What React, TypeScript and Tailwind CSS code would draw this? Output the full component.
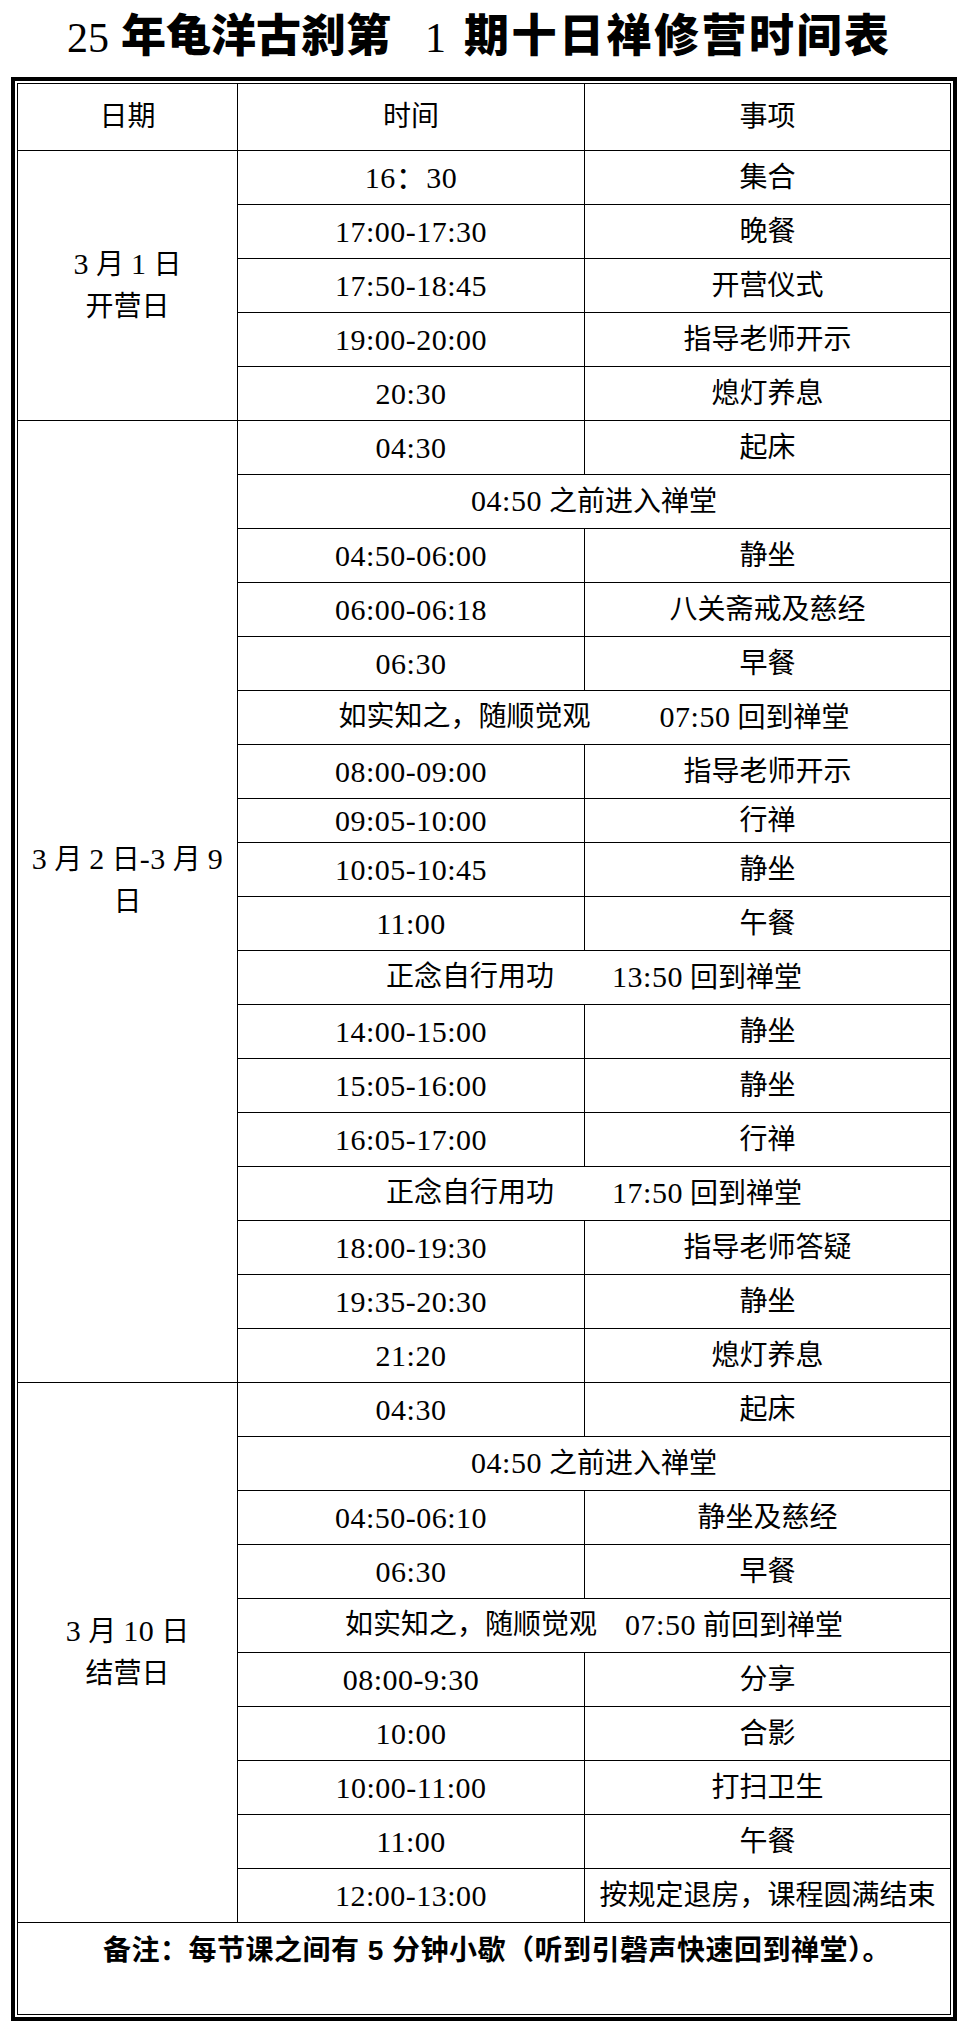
import type { ReactNode } from "react";

type Item =
  | { time: string; event: string; short?: boolean }
  | { span: ReactNode };

type Day = {
  label: ReactNode;
  spanClass: string;
  labelClass?: string;
  items: Item[];
};

const Num = ({ children }: { children: ReactNode }) => (
  <span className="text-[30px] tracking-[0.5px]">{children}</span>
);

const days: Day[] = [
  {
    label: (
      <>
        <div>
          <Num>3</Num> 月 <Num>1</Num> 日
        </div>
        <div>开营日</div>
      </>
    ),
    spanClass: "row-span-5",
    items: [
      { time: "16：30", event: "集合" },
      { time: "17:00-17:30", event: "晚餐" },
      { time: "17:50-18:45", event: "开营仪式" },
      { time: "19:00-20:00", event: "指导老师开示" },
      { time: "20:30", event: "熄灯养息" },
    ],
  },
  {
    label: (
      <>
        <div>
          <Num>3</Num> 月 <Num>2</Num> 日<Num>-3</Num> 月 <Num>9</Num>
        </div>
        <div>日</div>
      </>
    ),
    spanClass: "row-span-18",
    labelClass: "pb-[42px]",
    items: [
      { time: "04:30", event: "起床" },
      {
        span: (
          <span>
            <Num>04:50</Num> 之前进入禅堂
          </span>
        ),
      },
      { time: "04:50-06:00", event: "静坐" },
      { time: "06:00-06:18", event: "八关斋戒及慈经" },
      { time: "06:30", event: "早餐" },
      {
        span: (
          <div className="flex gap-[69px]">
            <span>如实知之，随顺觉观</span>
            <span>
              <Num>07:50</Num> 回到禅堂
            </span>
          </div>
        ),
      },
      { time: "08:00-09:00", event: "指导老师开示" },
      { time: "09:05-10:00", event: "行禅", short: true },
      { time: "10:05-10:45", event: "静坐" },
      { time: "11:00", event: "午餐" },
      {
        span: (
          <div className="flex gap-[58px]">
            <span>正念自行用功</span>
            <span>
              <Num>13:50</Num> 回到禅堂
            </span>
          </div>
        ),
      },
      { time: "14:00-15:00", event: "静坐" },
      { time: "15:05-16:00", event: "静坐" },
      { time: "16:05-17:00", event: "行禅" },
      {
        span: (
          <div className="flex gap-[58px]">
            <span>正念自行用功</span>
            <span>
              <Num>17:50</Num> 回到禅堂
            </span>
          </div>
        ),
      },
      { time: "18:00-19:30", event: "指导老师答疑" },
      { time: "19:35-20:30", event: "静坐" },
      { time: "21:20", event: "熄灯养息" },
    ],
  },
  {
    label: (
      <>
        <div>
          <Num>3</Num> 月 <Num>10</Num> 日
        </div>
        <div>结营日</div>
      </>
    ),
    spanClass: "row-span-10",
    items: [
      { time: "04:30", event: "起床" },
      {
        span: (
          <span>
            <Num>04:50</Num> 之前进入禅堂
          </span>
        ),
      },
      { time: "04:50-06:10", event: "静坐及慈经" },
      { time: "06:30", event: "早餐" },
      {
        span: (
          <div className="flex gap-[28px]">
            <span>如实知之，随顺觉观</span>
            <span>
              <Num>07:50</Num> 前回到禅堂
            </span>
          </div>
        ),
      },
      { time: "08:00-9:30", event: "分享" },
      { time: "10:00", event: "合影" },
      { time: "10:00-11:00", event: "打扫卫生" },
      { time: "11:00", event: "午餐" },
      { time: "12:00-13:00", event: "按规定退房，课程圆满结束" },
    ],
  },
];

export default function App() {
  return (
    <div className="w-[971px] min-h-[2028px] bg-white text-black font-['Liberation_Serif','Noto_Sans_CJK_SC',serif]">
      {/* Title */}
      <div className="h-[77px] pl-[67px] flex items-baseline leading-[66px] whitespace-nowrap">
        <span className="text-[42px]">25</span>
        <span className="ml-[12px] text-[45px] font-black font-['Noto_Sans_CJK_SC',sans-serif]">
          年龟洋古刹第
        </span>
        <span className="ml-[34px] text-[42px]">1</span>
        <span className="ml-[18px] text-[45px] tracking-[2.5px] font-black font-['Noto_Sans_CJK_SC',sans-serif]">
          期十日禅修营时间表
        </span>
      </div>

      {/* Double-bordered table */}
      <div className="ml-[11px] w-[946px] border-4 border-black p-[2px]">
        <div className="border border-black grid grid-cols-[220px_347px_365px] text-[28px] leading-[42px]">
          <div className="h-[67px] border-r border-b border-black flex items-center justify-center">
            日期
          </div>
          <div className="h-[67px] border-r border-b border-black flex items-center justify-center">
            时间
          </div>
          <div className="h-[67px] border-b border-black flex items-center justify-center">
            事项
          </div>

          {days.map((day, d) => (
            <div key={d} className="contents">
              <div
                className={`col-start-1 ${day.spanClass} border-r border-b border-black flex flex-col items-center justify-center ${day.labelClass ?? ""}`}
              >
                {day.label}
              </div>
              {day.items.map((item, i) =>
                "span" in item ? (
                  <div
                    key={i}
                    className="col-start-2 col-span-2 h-[54px] border-b border-black flex items-center justify-center"
                  >
                    {item.span}
                  </div>
                ) : (
                  <div key={i} className="contents">
                    <div
                      className={`col-start-2 ${item.short ? "h-[44px]" : "h-[54px]"} border-r border-b border-black flex items-center justify-center text-[30px] tracking-[0.5px]`}
                    >
                      {item.time}
                    </div>
                    <div
                      className={`col-start-3 ${item.short ? "h-[44px]" : "h-[54px]"} border-b border-black flex items-center justify-center`}
                    >
                      {item.event}
                    </div>
                  </div>
                )
              )}
            </div>
          ))}

          {/* Note */}
          <div className="col-span-3 h-[91px] pt-[4px] pl-[26px] text-center text-[28px] tracking-[0.5px] leading-[48px] font-bold font-['Liberation_Sans','Noto_Sans_CJK_SC',sans-serif]">
            备注：每节课之间有 5 分钟小歇（听到引磬声快速回到禅堂）。
          </div>
        </div>
      </div>
    </div>
  );
}
